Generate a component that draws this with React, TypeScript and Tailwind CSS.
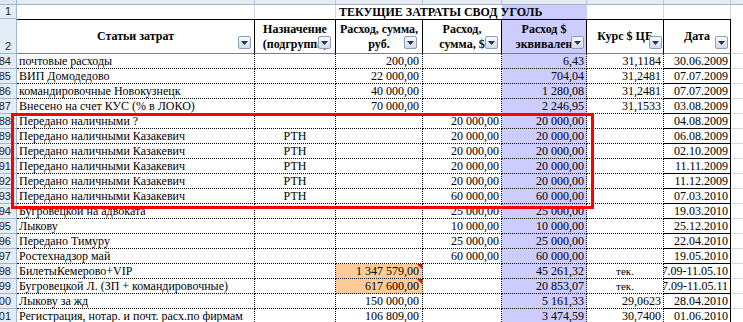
import React from "react";

type Row = {
  n: string;
  b: string;
  c?: string;
  d?: string;
  e?: string;
  f?: string;
  g?: string;
  h?: string;
  peach?: boolean;
  gCenter?: boolean;
};

const rows: Row[] = [
  { n: "84", b: "почтовые расходы", d: "200,00", f: "6,43", g: "31,1184", h: "30.06.2009" },
  { n: "85", b: "ВИП Домодедово", d: "22 000,00", f: "704,04", g: "31,2481", h: "07.07.2009" },
  { n: "86", b: "командировочные Новокузнецк", d: "40 000,00", f: "1 280,08", g: "31,2481", h: "07.07.2009" },
  { n: "87", b: "Внесено на счет КУС (% в ЛОКО)", d: "70 000,00", f: "2 246,95", g: "31,1533", h: "03.08.2009" },
  { n: "88", b: "Передано наличными ?", e: "20 000,00", f: "20 000,00", h: "04.08.2009" },
  { n: "89", b: "Передано наличными Казакевич", c: "РТН", e: "20 000,00", f: "20 000,00", h: "06.08.2009" },
  { n: "90", b: "Передано наличными Казакевич", c: "РТН", e: "20 000,00", f: "20 000,00", h: "02.10.2009" },
  { n: "91", b: "Передано наличными Казакевич", c: "РТН", e: "20 000,00", f: "20 000,00", h: "11.11.2009" },
  { n: "92", b: "Передано наличными Казакевич", c: "РТН", e: "20 000,00", f: "20 000,00", h: "11.12.2009" },
  { n: "93", b: "Передано наличными Казакевич", c: "РТН", e: "60 000,00", f: "60 000,00", h: "07.03.2010" },
  { n: "94", b: "Бугровецкой на адвоката", e: "25 000,00", f: "25 000,00", h: "19.03.2010" },
  { n: "95", b: "Лыкову", e: "10 000,00", f: "10 000,00", h: "25.12.2010" },
  { n: "96", b: "Передано Тимуру", e: "25 000,00", f: "25 000,00", h: "22.04.2010" },
  { n: "97", b: "Ростехнадзор май", e: "60 000,00", f: "60 000,00", h: "19.05.2010" },
  { n: "98", b: "БилетыКемерово+VIP", d: "1 347 579,00", f: "45 261,32", g: "тек.", h: "17.09-11.05.10", peach: true, gCenter: true },
  { n: "99", b: "Бугровецкой Л. (ЗП + командировочные)", d: "617 600,00", f: "20 853,07", g: "тек.", h: "17.09-11.05.11", peach: true, gCenter: true },
  { n: "100", b: "Лыкову за жд", d: "150 000,00", f: "5 161,33", g: "29,0623", h: "28.04.2010" },
  { n: "101", b: "Регистрация, нотар. и почт. расх.по фирмам", d: "106 809,00", f: "3 474,59", g: "30,7400", h: "01.06.2010" },
];

const GRID = "grid grid-cols-[17px_238px_81px_87px_79px_85px_77px_67px_12px]";

function FilterBtn({ right }: { right: string }) {
  return (
    <span
      className={`absolute bottom-[4px] ${right} w-[13px] h-[13px] border border-[#8a9fbe] rounded-[2px] bg-linear-to-b from-[#f7f9fc] to-[#d3dbe8] flex items-center justify-center`}
    >
      <svg width="7" height="4" viewBox="0 0 7 4">
        <path d="M0 0h7L3.5 4z" fill="#27344f" />
      </svg>
    </span>
  );
}

function RowHead({ n, h }: { n: string; h: string }) {
  return (
    <div
      className={`${h} bg-[#e4ecf7] border-r border-b border-[#9eb6ce] flex items-end justify-end pr-[5px] overflow-hidden font-['Liberation_Sans',sans-serif] text-[11px] leading-[13px] text-[#222] whitespace-nowrap`}
    >
      {n}
    </div>
  );
}

export default function App() {
  return (
    <div className="relative w-[743px] h-[322px] overflow-hidden bg-white font-['Liberation_Serif',serif] text-black text-[12px]">
      {/* column header strip */}
      <div className={`${GRID} h-[5px] bg-[#e6ebf2] border-b border-[#9eb6ce]`}>
        <div className="border-r border-[#9eb6ce] bg-[#dfe5ee]" />
        <div className="border-r border-[#b7c6d9]" />
        <div className="border-r border-[#b7c6d9]" />
        <div className="border-r border-[#b7c6d9]" />
        <div className="border-r border-[#b7c6d9]" />
        <div className="border-r border-[#b7c6d9]" />
        <div className="border-r border-[#b7c6d9]" />
        <div className="border-r border-[#b7c6d9]" />
        <div />
      </div>

      {/* row 1 */}
      <div className={`${GRID} h-[14px]`}>
        <RowHead n="1" h="h-[14px]" />
        <div className="border-r border-[#d0d7e5]" />
        <div className="border-r border-[#d0d7e5]" />
        <div className="pl-[3px] whitespace-nowrap font-bold leading-[14px]">
          <span className="relative z-10">ТЕКУЩИЕ ЗАТРАТЫ СВОД УГОЛЬ</span>
        </div>
        <div />
        <div className="bg-[#ccccff]" />
        <div className="border-r border-[#d0d7e5]" />
        <div className="border-r border-[#d0d7e5]" />
        <div />
      </div>

      {/* row 2 header */}
      <div className={`${GRID} h-[35px]`}>
        <RowHead n="2" h="h-[35px]" />
        <div className="relative border-t border-r border-black border-b-[#7f7f7f] border-b flex items-center justify-center font-bold leading-[15px]">
          Статьи затрат
          <FilterBtn right="right-[3px]" />
        </div>
        <div className="relative border-t border-r border-black border-b border-b-[#7f7f7f] flex flex-col items-center justify-center font-bold leading-[15px] text-center overflow-hidden">
          <span>Назначение</span>
          <span className="whitespace-nowrap">(подгруппа)</span>
          <FilterBtn right="right-[4px]" />
        </div>
        <div className="relative border-t border-r border-black border-b border-b-[#7f7f7f] flex flex-col items-center justify-center font-bold leading-[15px] text-center">
          <span>Расход, сумма,</span>
          <span>руб.</span>
          <FilterBtn right="right-[5px]" />
        </div>
        <div className="relative border-t border-r border-black border-b border-b-[#7f7f7f] flex flex-col items-center justify-center font-bold leading-[15px] text-center">
          <span>Расход,</span>
          <span>сумма, $</span>
          <FilterBtn right="right-[3px]" />
        </div>
        <div className="relative bg-[#ccccff] border-t border-r border-black border-b border-b-[#7f7f7f] flex flex-col items-center justify-center font-bold leading-[15px] text-center overflow-hidden">
          <span>Расход $</span>
          <span className="whitespace-nowrap">эквивален</span>
          <FilterBtn right="right-[2px]" />
        </div>
        <div className="relative border-t border-r border-black border-b border-b-[#7f7f7f] flex items-center justify-center font-bold leading-[15px] whitespace-nowrap overflow-hidden">
          Курс $ ЦБ
          <FilterBtn right="right-[1px]" />
        </div>
        <div className="relative border-t border-r border-black border-b border-b-[#7f7f7f] flex items-center justify-center font-bold leading-[15px]">
          Дата
          <FilterBtn right="right-[2px]" />
        </div>
        <div className="border-b border-[#d0d7e5]" />
      </div>

      {/* data rows */}
      {rows.map((r) => (
        <div key={r.n} className={`${GRID} h-[15px]`}>
          <RowHead n={r.n} h="h-[15px]" />
          <div className="border-r border-b border-dotted border-black pl-[2px] leading-[14px] whitespace-nowrap overflow-hidden">
            {r.b}
          </div>
          <div className="border-r border-b border-dotted border-black text-center leading-[14px]">
            {r.c}
          </div>
          <div
            className={`relative border-r border-b border-dotted border-black text-right pr-[3px] leading-[14px] whitespace-nowrap ${
              r.peach ? "bg-[#ffcc99]" : ""
            }`}
          >
            {r.d}
            {r.peach && (
              <span className="absolute top-0 right-0 w-0 h-0 border-t-[5px] border-l-[5px] border-t-[#ff0000] border-l-transparent" />
            )}
          </div>
          <div className="border-r border-b border-dotted border-black text-right pr-[2px] leading-[14px] whitespace-nowrap">
            {r.e}
          </div>
          <div className="bg-[#ccccff] border-r border-b border-dotted border-black text-right pr-[2px] leading-[14px] whitespace-nowrap">
            {r.f}
          </div>
          <div
            className={`border-r border-b border-dotted border-black leading-[14px] whitespace-nowrap ${
              r.gCenter ? "text-center text-[11px]" : "text-right pr-[2px]"
            }`}
          >
            {r.g}
          </div>
          <div className="border-r border-r-black border-b border-b-black border-b-dotted flex justify-end pr-[2px] leading-[14px] whitespace-nowrap overflow-hidden">
            {r.h}
          </div>
          <div className="border-b border-[#d0d7e5]" />
        </div>
      ))}

      {/* red annotation rectangle */}
      <div className="absolute left-[11px] top-[113px] w-[583px] h-[96px] border-[3px] border-[#ff0000] pointer-events-none" />
    </div>
  );
}
